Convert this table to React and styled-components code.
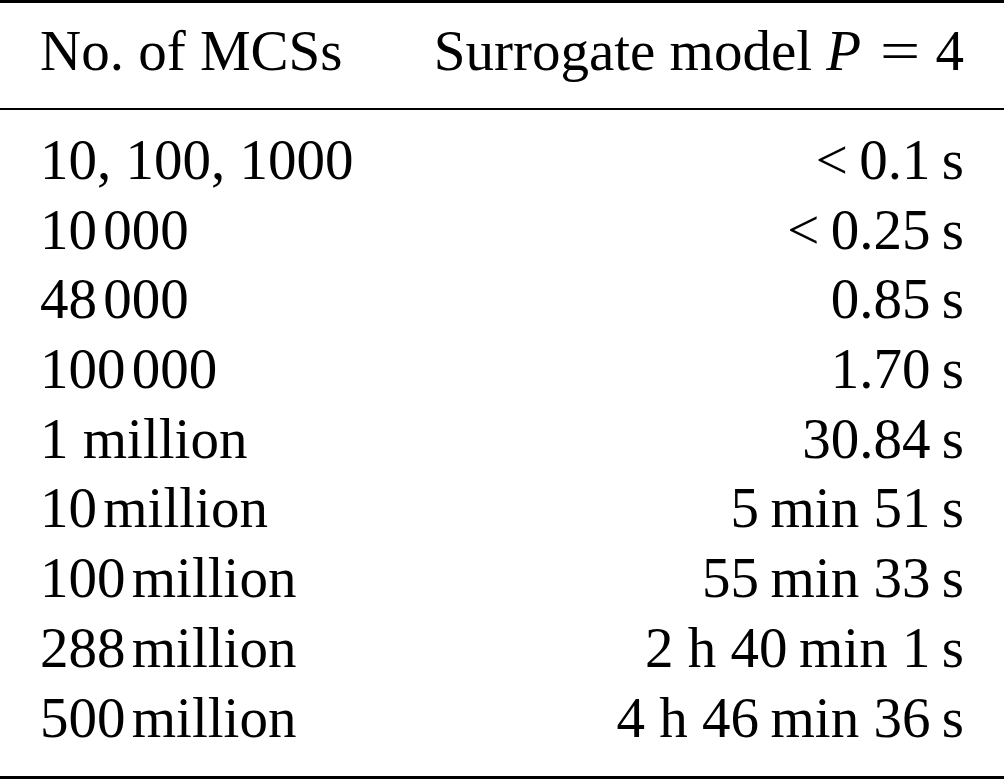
import React from 'react';
import styled, {createGlobalStyle} from 'styled-components';

// "~" marks a thin space, as \, does in the source table
const rows = [
  ['10, 100, 1000', '<~0.1~s'],
  ['10~000', '<~0.25~s'],
  ['48~000', '0.85~s'],
  ['100~000', '1.70~s'],
  ['1 million', '30.84~s'],
  ['10~million', '5~min 51~s'],
  ['100~million', '55~min 33~s'],
  ['288~million', '2 h 40~min 1~s'],
  ['500~million', '4 h 46~min 36~s'],
];

function withThin(text, size) {
  return text.split('~').map((part, index) => (
    <React.Fragment key={index}>
      {index > 0 && <Thin size={size} />}
      {part}
    </React.Fragment>
  ));
}

export default function App() {
  return (
    <>
      <GlobalStyle />
      <Table>
        <Head>
          <Cell>No. of MCSs</Cell>
          <Cell align="right">
            Surrogate model <Var>P</Var>
            <Op>=</Op>4
          </Cell>
        </Head>
        <Body>
          {rows.map(([count, time], index) => (
            <React.Fragment key={index}>
              <Cell>{withThin(count, 0.11)}</Cell>
              <Cell align="right">{withThin(time, 0.2)}</Cell>
            </React.Fragment>
          ))}
        </Body>
      </Table>
    </>
  );
}

const GlobalStyle = createGlobalStyle`
  html, body {
    margin: 0;
    padding: 0;
    background: #fff;
  }
`;

const Table = styled.div`
  width: 1004px;
  height: 779px;
  box-sizing: border-box;
  display: flex;
  flex-direction: column;
  border-top: 3px solid #000;
  border-bottom: 3px solid #000;
  font-family: 'Liberation Serif', 'Times New Roman', serif;
  font-size: 57px;
  color: #000;
`;

const Section = styled.div`
  display: grid;
  grid-template-columns: 1fr auto;
  padding: 0 40px;
`;

const Head = styled(Section)`
  padding-top: 12.75px;
  padding-bottom: 22.25px;
  line-height: 70px;
  border-bottom: 2px solid #000;
`;

const Body = styled(Section)`
  flex: 1;
  padding-top: 14.9px;
  line-height: 69.7px;
  align-content: start;
`;

const Cell = styled.div`
  white-space: pre;
  text-align: ${props => (props.align === 'right' ? 'right' : 'left')};
`;

const Thin = styled.span`
  display: inline-block;
  width: ${props => props.size}em;
`;

const Var = styled.i`
  font-style: italic;
`;

const Op = styled.span`
  display: inline-block;
  transform: scaleX(1.25);
  margin: 0 0.34em 0 0.4em;
`;
